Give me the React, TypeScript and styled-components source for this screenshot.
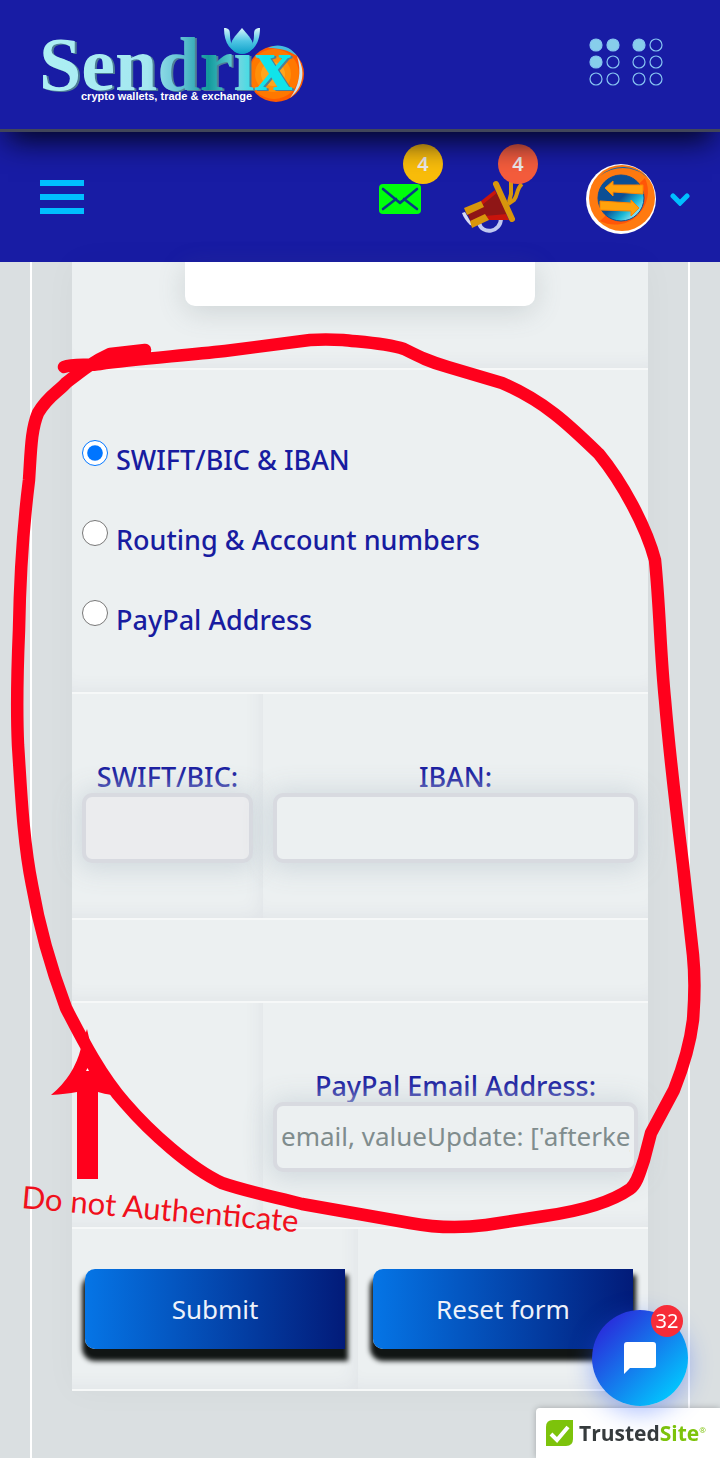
import React from "react";
import styled, { createGlobalStyle } from "styled-components";

const GlobalStyle = createGlobalStyle`
  *, *::before, *::after { box-sizing: border-box; }
  body {
    margin: 0;
    background: #dadfe1;
    font-family: "Noto Sans", "Open Sans", sans-serif;
    font-size: 27px;
    color: #181ca0;
  }
`;

const Page = styled.div`
  position: relative;
  display: flex;
  flex-direction: column;
  min-height: 100vh;
`;

const TopBar = styled.header`
  position: relative;
  z-index: 2;
  display: flex;
  align-items: center;
  justify-content: space-between;
  height: 132px;
  padding: 0 56px 0 30px;
  background: #181ca4;
  border-bottom: 3px solid #42465a;
  box-shadow: 0 16px 28px -8px #04051c;
`;

const PlainLink = styled.a`
  display: block;
  line-height: 0;
`;

const NavBar = styled.nav`
  display: flex;
  align-items: center;
  height: 130px;
  padding: 4px 30px 0 40px;
  background: #181ca4;
`;

const IconButton = styled.button`
  position: relative;
  display: block;
  padding: 0;
  border: 0;
  background: none;
  line-height: 0;
`;

const Alerts = styled.div`
  display: flex;
  gap: 41px;
  margin-left: auto;
`;

const Profile = styled(IconButton)`
  display: flex;
  align-items: center;
  gap: 14px;
  margin-left: 70px;
`;

const CountBadge = styled.span<{ $color: string }>`
  position: absolute;
  top: -20px;
  right: -22px;
  width: 40px;
  border-radius: 50%;
  background: ${(p) => p.$color};
  color: #ece9ea;
  font: 600 20px/40px "Noto Sans", sans-serif;
  text-align: center;
`;

const Frame = styled.main`
  flex: 1;
  margin: 0 30px;
  padding: 0 40px 67px;
  border: solid #fff;
  border-width: 0 2px;
`;

const Panel = styled.form`
  background: #ecf0f1;
  box-shadow: 0 0 32px rgba(0, 0, 0, 0.03);
`;

const Row = styled.div<{ $columns?: string; $height: number }>`
  display: grid;
  grid-template-columns: ${(p) => p.$columns ?? "1fr"};
  min-height: ${(p) => p.$height}px;
  border-bottom: 2px solid #f6f8f8;
`;

const Cell = styled.div<{ $divider?: boolean }>`
  display: flex;
  flex-direction: column;
  min-width: 0;
  box-shadow: inset ${(p) => (p.$divider ? "-16px" : "0")} -16px 20px -16px rgba(60, 70, 100, 0.08);
`;

const FieldCell = styled(Cell)`
  padding: 67px 10px 0;
`;

const ButtonCell = styled(Cell)`
  align-items: center;
  padding: 40px 13px;
`;

const PreviewCard = styled.div`
  width: 350px;
  max-width: 100%;
  height: 44px;
  margin: 0 auto;
  border-radius: 0 0 10px 10px;
  background: #fff;
  box-shadow: 0 6px 28px rgba(90, 105, 110, 0.2);
`;

const MethodList = styled.fieldset`
  display: flex;
  flex-direction: column;
  gap: 40px;
  margin: 0;
  padding: 70px 10px 52px;
  border: 0;
`;

const Method = styled.label`
  display: flex;
  align-items: flex-start;
  gap: 8px;
  font-weight: 500;
  line-height: 40px;
`;

const Radio = styled.input`
  width: 26px;
  height: 26px;
  margin: 0;
  accent-color: #0075ff;
`;

const FieldLabel = styled.label`
  font-weight: 500;
  line-height: 32px;
  text-align: center;
`;

const Field = styled.input<{ $tint?: string }>`
  position: relative;
  width: 100%;
  height: 70px;
  padding: 0 4px 2px;
  border: 4px solid #d8dae0;
  border-radius: 10px;
  background: ${(p) => p.$tint ?? "#ecf0f1"};
  box-shadow: 0 2px 26px 4px rgba(204, 213, 218, 0.9);
  font: 400 26px/36px "Noto Sans", sans-serif;
  color: #181ca0;

  &::placeholder { color: #7f8c8d; opacity: 1; }
`;

const ActionButton = styled.button`
  width: 100%;
  max-width: 260px;
  height: 80px;
  border: 0;
  border-radius: 10px 0 0 10px;
  background: linear-gradient(to right, #0575e6, #021b79);
  box-shadow: 0 9px 5px 3px #111514;
  color: #eef2fa;
  font: 400 26px/36px "Noto Sans", sans-serif;
`;

const ChatButton = styled.button`
  position: fixed;
  right: 32px;
  bottom: 52px;
  z-index: 5;
  display: grid;
  place-items: center;
  width: 96px;
  height: 96px;
  padding: 0;
  border: 0;
  border-radius: 50%;
  background: linear-gradient(135deg, #2a27da 10%, #00ccff 90%);
  box-shadow: 0 6px 24px rgba(40, 90, 255, 0.4);
`;

const ChatCount = styled.span`
  position: absolute;
  top: -5px;
  right: 5px;
  width: 32px;
  border-radius: 50%;
  background: #f72c38;
  color: #fff;
  font: 400 20px/32px "Noto Sans", sans-serif;
  text-align: center;
`;

const TrustSeal = styled.a`
  position: fixed;
  right: 0;
  bottom: 0;
  z-index: 4;
  display: flex;
  align-items: center;
  gap: 6px;
  width: 184px;
  height: 50px;
  padding-left: 10px;
  border-radius: 4px 0 0 0;
  background: #fff;
  box-shadow: 0 0 6px rgba(0, 0, 0, 0.25);
  color: #363b3c;
  font: 700 21px/28px "Open Sans", sans-serif;
  text-decoration: none;
`;

const SealAccent = styled.span`
  color: #7dc30b;
  font-weight: 700;
`;

const SealMark = styled.sup`
  color: #7dc30b;
  font-size: 8px;
  font-weight: 400;
  line-height: 0;
`;

const Markup = styled.svg`
  position: absolute;
  top: 0;
  left: 0;
  z-index: 3;
  width: 100%;
  height: auto;
  pointer-events: none;
`;

const Wordmark = styled.text`
  font: 700 76px "Liberation Serif", serif;
  filter: drop-shadow(2px 1px 0 #4f7f96);
`;

const Logo = () => (
  <svg width="280" height="90" viewBox="30 20 280 90" role="img" aria-label="Sendrix">
    <defs>
      <linearGradient id="word" gradientUnits="userSpaceOnUse" x1="40" x2="295" y1="0" y2="0">
        <stop offset="0" stopColor="#aef0f4" />
        <stop offset="0.42" stopColor="#a4e8f0" />
        <stop offset="0.56" stopColor="#5fc0d2" />
        <stop offset="0.66" stopColor="#129a9c" />
        <stop offset="0.78" stopColor="#6fd6e0" />
        <stop offset="0.88" stopColor="#10e4ea" />
      </linearGradient>
      <linearGradient id="petal" x1="0" x2="0" y1="0" y2="1">
        <stop offset="0" stopColor="#d8f6fc" />
        <stop offset="0.5" stopColor="#4fc6e4" />
        <stop offset="1" stopColor="#0c9fc8" />
      </linearGradient>
    </defs>
    <circle cx="276" cy="74" r="28" fill="#ff5a00" />
    <circle cx="274" cy="74" r="25" fill="#ff7800" />
    <circle cx="273" cy="74" r="18" fill="#ff8f08" />
    <circle cx="273" cy="74" r="12" fill="#ffa51c" />
    <path d="M268 48C276 43 290 45 297 56C288 50 279 48 268 48Z" fill="#45bde0" />
    <path d="M297 56c9 14 7 31-7 42 9-12 12-26 7-42Z" fill="#cfe6ee" />
    <Wordmark x="39" y="90" fill="url(#word)">Sendrix</Wordmark>
    <path d="M242 28c8 9 11 13 11 17 0 5-5 9-11 9s-11-4-11-9c0-4 3-8 11-17Z" fill="url(#petal)" />
    <path d="M224 28c5 0 6 2 6 7 0 9 4 15 12 19-11-2-18-10-18-26ZM260 28c-5 0-6 2-6 7 0 9-4 15-12 19 11-2 18-10 18-26Z" fill="url(#petal)" />
    <text x="81" y="100" fill="#fff" fontFamily="Liberation Sans, sans-serif" fontWeight="700" fontSize="11">
      crypto wallets, trade &amp; exchange
    </text>
  </svg>
);

const DotMenu = () => (
  <svg width="76" height="54" viewBox="588 38 76 54" aria-hidden="true">
    {[45, 62, 79].map((y, row) =>
      [596, 613, 639, 656].map((x, col) => (
        <circle
          key={x + "-" + y}
          cx={x}
          cy={y}
          r="6"
          stroke="#87c5f2"
          strokeWidth="1.2"
          fill={(row === 0 && col < 3) || (row === 1 && col === 0) ? "#87ceeb" : "none"}
        />
      ))
    )}
  </svg>
);

const Burger = () => (
  <svg width="44" height="40" viewBox="0 0 44 40" aria-hidden="true">
    <path d="M0 1h44v6H0zM0 15h44v6H0zM0 29h44v6H0z" fill="#00bfff" />
  </svg>
);

const Envelope = () => (
  <svg width="42" height="70" viewBox="379 164 42 70" aria-hidden="true">
    <rect x="379" y="184" width="42" height="30" rx="4" fill="#00ff0c" />
    <path d="M383 189l17 14 17-14M383 209l13-10M417 209l-13-10" fill="none" stroke="#0a3a86" strokeWidth="2.6" strokeLinecap="round" strokeLinejoin="round" />
    <path d="M394 198l6 6 6-6-6 3Z" fill="#0a3a86" />
  </svg>
);

const Megaphone = () => (
  <svg width="54" height="70" viewBox="461 164 54 70" overflow="visible" aria-hidden="true">
    <path d="M510 182v12l-2 8M521 184c-6 5-4 12-8 16l-6 4" fill="none" stroke="#d8960c" strokeWidth="4" />
    <path d="M478 223c3 12 22 10 22-5" fill="none" stroke="#c0c8f0" strokeWidth="4" />
    <path d="M461 213l3-1 8 14-3-1q-6-6-8-12Z" fill="#d6daf4" />
    <path d="M480 201l14-11 14 30-22 0Z" fill="#c8140c" />
    <path d="M466 212l15-7 16-13 9 22-22 2-14 6Z" fill="#8f1616" />
    <path d="M463 208l17-7 3 6-17 8ZM469 221l15-7 4 6-17 8Z" fill="#d8960c" />
    <path d="M495 184l16 35" stroke="#d8960c" strokeWidth="6" strokeLinecap="round" />
  </svg>
);

const Avatar = () => (
  <svg width="70" height="70" viewBox="0 0 70 70" aria-hidden="true">
    <defs>
      <linearGradient id="globe" x1="0" x2="1" y1="0" y2="1">
        <stop offset="0.5" stopColor="#0c4f94" />
        <stop offset="0.7" stopColor="#18b8d8" />
        <stop offset="0.9" stopColor="#b8f0f4" />
      </linearGradient>
    </defs>
    <circle cx="35" cy="35" r="35" fill="#fff" />
    <circle cx="36" cy="34" r="33" fill="#ff7a10" />
    <path d="M14 57L59 14a33 33 0 0 1-45 43Z" fill="#ff5608" />
    <path d="M14 12A34 34 0 0 1 62 14C48 1 28 1 14 12Z" fill="#1068b0" />
    <circle cx="35" cy="34" r="23" fill="url(#globe)" stroke="#0c4f94" />
    <path d="M19 24l8-7v4h30v9l-30-2v4ZM53 44l-8-8v3l-31-2v9l31 1v5Z" fill="#ffa20c" stroke="#ff8400" />
  </svg>
);

const Chevron = () => (
  <svg width="20" height="14" viewBox="0 0 20 14" aria-hidden="true">
    <path d="M3 4l7 7 7-7" fill="none" stroke="#00bfff" strokeWidth="5" strokeLinecap="round" />
  </svg>
);

const ChatIcon = () => (
  <svg width="32" height="32" viewBox="0 0 32 32" aria-hidden="true">
    <path d="M3 0h26q3 0 3 3v20q0 3-3 3H6l-6 6V3q0-3 3-3Z" fill="#fff" />
  </svg>
);

const SealIcon = () => (
  <svg width="27" height="26" viewBox="0 0 27 26" aria-hidden="true">
    <path d="M7 0h20v19q0 7-7 7H0V7q0-7 7-7Z" fill="#7dc30b" />
    <path d="M5 14l6 6L22 7" fill="none" stroke="#fff" strokeWidth="4" />
  </svg>
);

const HandMarks = () => (
  <Markup viewBox="0 0 720 1458">
    <path
      d="M64 367C74 363 88 366 100 364C135 359 180 356 225 351L310 340Q325 339 343 340C360 342 385 343 404 349C420 357 430 362 448 367L502 383C546 402 570 426 599 454C622 482 646 526 655 560C660 610 660 650 665 700C670 760 675 800 683 865L693 955C696 985 694 1005 693 1020C690 1045 682 1070 674 1090L651 1133L644 1160C640 1172 637 1184 630 1189C610 1203 580 1211 545 1216L486 1225Q448 1230 410 1223L302 1204C270 1196 245 1191 222 1183C190 1168 150 1132 125 1103C100 1075 80 1035 66 1008C48 960 38 920 32 885C23 840 21 790 18 745Q16 700 19 630C20 570 24 520 29 480C31 450 31 430 38 413C48 396 58 392 66 383C80 372 92 362 110 354L145 350"
      fill="none"
      stroke="#ff001c"
      strokeWidth="12.5"
      strokeLinecap="round"
      strokeLinejoin="round"
    />
    <path d="M87 1029L90 1042L112 1095Q104 1094 98 1092V1179H77V1092Q66 1094 51 1095Q74 1076 81 1048Z" fill="#ff001c" />
    <path d="M86 1071l1.500-3 1.500 3Z" fill="#fff" />
    <text transform="translate(21 1208) rotate(5)" fill="#f0101c" fontFamily="Lato, sans-serif" fontSize="31">
      Do not Authenticate
    </text>
  </Markup>
);

const methods = ["SWIFT/BIC & IBAN", "Routing & Account numbers", "PayPal Address"];

export default function App() {
  return (
    <Page>
      <GlobalStyle />
      <TopBar>
        <PlainLink href="#home">
          <Logo />
        </PlainLink>
        <IconButton type="button" aria-label="Apps">
          <DotMenu />
        </IconButton>
      </TopBar>
      <NavBar>
        <IconButton type="button" aria-label="Menu">
          <Burger />
        </IconButton>
        <Alerts>
          <IconButton type="button" aria-label="Messages">
            <Envelope />
            <CountBadge $color="#f9bd0a">4</CountBadge>
          </IconButton>
          <IconButton type="button" aria-label="Announcements">
            <Megaphone />
            <CountBadge $color="#f45c3c">4</CountBadge>
          </IconButton>
        </Alerts>
        <Profile type="button" aria-label="Account">
          <Avatar />
          <Chevron />
        </Profile>
      </NavBar>
      <Frame>
        <Panel onSubmit={(e) => e.preventDefault()}>
          <Row $height={108}>
            <Cell>
              <PreviewCard />
            </Cell>
          </Row>
          <Row $height={324}>
            <Cell>
              <MethodList aria-label="Payout method">
                {methods.map((name, i) => (
                  <Method key={name}>
                    <Radio type="radio" name="method" defaultChecked={i === 0} />
                    {name}
                  </Method>
                ))}
              </MethodList>
            </Cell>
          </Row>
          <Row $height={226} $columns="191fr 385fr">
            <FieldCell $divider>
              <FieldLabel htmlFor="swift">SWIFT/BIC:</FieldLabel>
              <Field id="swift" $tint="#ebecee" />
            </FieldCell>
            <FieldCell>
              <FieldLabel htmlFor="iban">IBAN:</FieldLabel>
              <Field id="iban" />
            </FieldCell>
          </Row>
          <Row $height={83}>
            <Cell />
          </Row>
          <Row $height={226} $columns="191fr 385fr">
            <Cell $divider />
            <FieldCell>
              <FieldLabel htmlFor="paypal">PayPal Email Address:</FieldLabel>
              <Field id="paypal" type="email" placeholder="email, valueUpdate: ['afterkeydown']" />
            </FieldCell>
          </Row>
          <Row $height={162} $columns="286fr 290fr">
            <ButtonCell $divider>
              <ActionButton type="submit">Submit</ActionButton>
            </ButtonCell>
            <ButtonCell>
              <ActionButton type="reset">Reset form</ActionButton>
            </ButtonCell>
          </Row>
        </Panel>
      </Frame>
      <HandMarks />
      <ChatButton type="button" aria-label="Open chat">
        <ChatIcon />
        <ChatCount>32</ChatCount>
      </ChatButton>
      <TrustSeal href="#trustedsite">
        <SealIcon />
        <span>
          Trusted<SealAccent>Site</SealAccent>
          <SealMark>®</SealMark>
        </span>
      </TrustSeal>
    </Page>
  );
}
